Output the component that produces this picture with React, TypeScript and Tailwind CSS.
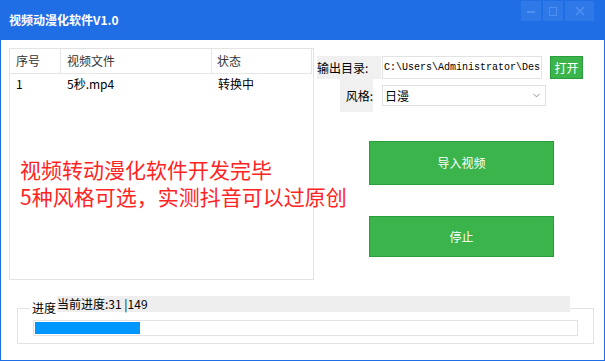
import { ChevronDown } from 'lucide-react';

const cjk = "font-['Noto_Sans_CJK_SC','Noto_Sans',sans-serif]";

export default function App() {
  return (
    <div className={`w-[605px] h-[361px] bg-[#206ee6] flex flex-col px-[1px] pb-[1px] ${cjk}`}>
      {/* title bar */}
      <div className="h-[40px] flex items-start justify-between pl-[8px] pr-[10px]">
        <div className="mt-[12px] text-[12px] leading-[16px] font-bold text-white">视频动漫化软件V1.0</div>
        <div className="flex gap-[2px] mt-[1px]">
          <div className="w-[20px] h-[20px] bg-[#2f78e8] flex items-center justify-center">
            <div className="w-[8px] h-[2px] bg-[#4f8ff0] mt-[2px]" />
          </div>
          <div className="w-[20px] h-[20px] bg-[#2f78e8] flex items-center justify-center">
            <div className="w-[8px] h-[9px] border border-[#4f8ff0]" />
          </div>
          <div className="w-[29px] h-[20px] bg-[#2f78e8] flex items-center justify-center">
            <svg width="10" height="10" viewBox="0 0 10 10" stroke="#4f8ff0" strokeWidth="1.6">
              <path d="M1 1 L9 9 M9 1 L1 9" />
            </svg>
          </div>
        </div>
      </div>

      {/* content */}
      <div className="flex-1 bg-white flex flex-col">
        <div className="flex pl-[8px] pt-[8px]">
          {/* list */}
          <div className="w-[305px] h-[232px] border border-[#e3e3e3] flex flex-col">
            <div className="flex h-[25px] border-b border-r border-[#e6e6e6] w-[302px] text-[12px] text-[#333] leading-[24px]">
              <div className="w-[51px] border-r border-[#e6e6e6] pl-[6px]">序号</div>
              <div className="w-[151px] border-r border-[#e6e6e6] pl-[6px]">视频文件</div>
              <div className="flex-1 pl-[5px]">状态</div>
            </div>
            <div className="flex text-[12px] text-black leading-[16px] mt-[2px]">
              <div className="w-[51px] pl-[6px]">1</div>
              <div className="w-[151px] pl-[6px]">5秒.mp4</div>
              <div className="flex-1 pl-[6px]">转换中</div>
            </div>
            <div className="mt-[64px] pl-[10px] text-[21px] leading-[27px] text-[#ff2424] whitespace-nowrap">
              <div className="h-[27px]">视频转动漫化软件开发完毕</div>
              <div className="h-[27px]">5种风格可选，实测抖音可以过原创</div>
            </div>
          </div>

          {/* right panel */}
          <div className="ml-[3px] pt-[8px] flex flex-col">
            <div className="flex items-center">
              <div className="w-[64px] h-[23px] bg-[#f0f0f0] text-[12px] leading-[23px] text-black">输出目录:</div>
              <div className="ml-[1px] w-[160px] h-[23px] border border-[#e3e3e3] overflow-hidden whitespace-nowrap pl-[1px] text-[10px] leading-[21px] font-['Liberation_Mono',monospace] text-black">
                C:\Users\Administrator\Des
              </div>
              <div className="ml-[8px] w-[33px] h-[23px] bg-[#3bb54b] border border-[#2a9e3c] text-white text-[12px] leading-[21px] text-center">
                打开
              </div>
            </div>
            <div className="flex items-center ml-[23px]">
              <div className="w-[33px] h-[33px] bg-[#f0f0f0] text-[12px] leading-[33px] text-black text-right">风格:</div>
              <div className="ml-[9px] w-[164px] h-[21px] border border-[#e0e0e0] flex items-center justify-between pl-[2px] pr-[3px] text-[12px] text-black">
                <span>日漫</span>
                <ChevronDown className="w-[11px] h-[11px] text-[#666]" strokeWidth={1.5} />
              </div>
            </div>
            <div className="ml-[52px] mt-[29px] w-[185px] h-[44px] bg-[#3bb54b] border border-[#2a9e3c] flex items-center justify-center text-white text-[12px]">
              导入视频
            </div>
            <div className="ml-[52px] mt-[31px] w-[185px] h-[41px] bg-[#3bb54b] border border-[#2a9e3c] flex items-center justify-center text-white text-[12px]">
              停止
            </div>
          </div>
        </div>

        {/* progress group */}
        <div className="relative ml-[16px] mt-[28px] w-[577px] h-[36px] border border-[#e3e3e3] pl-[15px] pt-[11px]">
          <div className="absolute left-[12px] top-[-8px] bg-white px-[2px] text-[12px] leading-[14px] text-black">进度</div>
          <div className="absolute left-[39px] top-[-13px] w-[513px] h-[16px] bg-[#eeeeee] text-[12px] leading-[16px] text-black">
            当前进度:31 |149
          </div>
          <div className="w-[545px] h-[16px] border border-[#e3e3e3] p-[1px]">
            <div className="h-full bg-[#0096ff]" style={{ width: 105 }} />
          </div>
        </div>
      </div>
    </div>
  );
}
